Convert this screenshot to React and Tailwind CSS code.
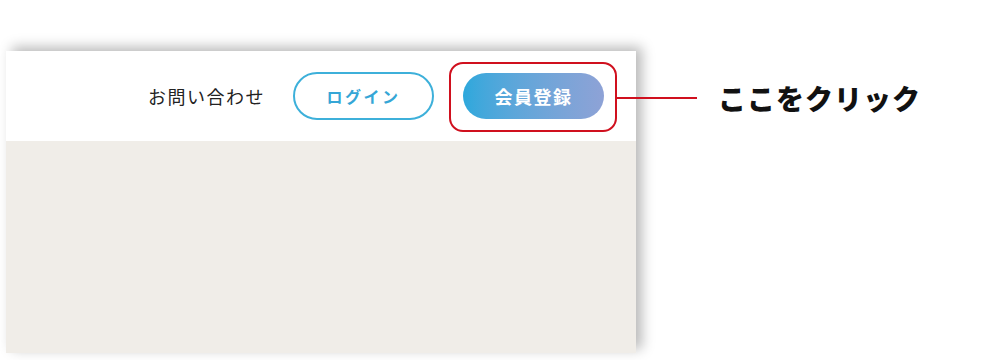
import React from "react";

const jp = { fontFamily: '"Noto Sans CJK JP", "Noto Sans", sans-serif' };

export default function App() {
  return (
    <div className="relative w-[989px] h-[360px] bg-white overflow-hidden" style={jp}>
      {/* screenshot card */}
      <div className="ml-[6px] mt-[51px] w-[630px] h-[302px] flex flex-col bg-white shadow-[6px_-4px_12px_rgba(0,0,0,0.28)]">
        <header className="h-[90px] flex items-center justify-end pr-[32px]">
          <span className="text-[18px] tracking-[1.5px] text-[#222]">お問い合わせ</span>
          <button className="ml-[28px] w-[141px] h-[48px] rounded-full border-2 border-[#3db0da] text-[#35a6d6] text-[16px] font-bold tracking-[2.5px]">
            ログイン
          </button>
          <button className="ml-[29px] w-[141px] h-[46px] rounded-full bg-gradient-to-r from-[#2ca8dc] to-[#8ea2d6] text-white text-[18px] font-bold tracking-[1.5px]">
            会員登録
          </button>
        </header>
        <div className="flex-1 bg-[#f0ede8]" />
      </div>

      {/* annotation */}
      <div className="absolute left-[449px] top-[62px] w-[168px] h-[70px] rounded-[14px] border-[2.5px] border-[#d0101e]" />
      <div className="absolute left-[617px] top-[78px] h-[40px] flex items-center">
        <div className="w-[80px] h-[2px] bg-[#d0101e]" />
        <span className="ml-[21px] text-[28px] font-black tracking-[1px] text-[#111]">ここをクリック</span>
      </div>
    </div>
  );
}
